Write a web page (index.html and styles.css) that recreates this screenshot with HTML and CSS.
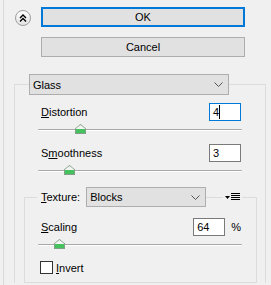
FILE: index.html
```html
<!DOCTYPE html>
<html lang="en">

<head>
  <meta charset="UTF-8" />
  <title>Glass</title>
  <link rel="stylesheet" href="styles.css">
</head>

<body>
  <div class="panel">
    <div class="top">
      <button class="collapse">
        <svg width="8" height="8" viewBox="0 0 8 8">
          <path d="M1 4 L4 1 L7 4 M1 7.5 L4 4.5 L7 7.5" fill="none" stroke="#000" stroke-width="1.4" />
        </svg>
      </button>
      <div class="actions">
        <button class="btn default">OK</button>
        <button class="btn">Cancel</button>
      </div>
    </div>

    <div class="group">
      <div class="select preset">
        <span>Glass</span>
        <svg width="9" height="5" viewBox="0 0 9 5">
          <path d="M0.5 0.5 L4.5 4.5 L8.5 0.5" fill="none" stroke="#555" />
        </svg>
      </div>

      <div class="field">
        <span><u>D</u>istortion</span>
        <div class="input focus">4<span class="caret"></span></div>
      </div>
      <div class="slider">
        <span class="thumb" style="left: 37px"></span>
      </div>

      <div class="field second">
        <span>S<u>m</u>oothness</span>
        <div class="input">3</div>
      </div>
      <div class="slider">
        <span class="thumb" style="left: 26px"></span>
      </div>

      <div class="texture">
        <div class="tex-head">
          <span class="tex-label"><u>T</u>exture:</span>
          <div class="select tex-select">
            <span>Blocks</span>
            <svg width="9" height="5" viewBox="0 0 9 5">
              <path d="M0.5 0.5 L4.5 4.5 L8.5 0.5" fill="none" stroke="#555" />
            </svg>
          </div>
          <span class="menu">
            <svg width="15" height="8" viewBox="0 0 15 8">
              <polygon points="0,3 5,3 2.5,6" fill="#000" />
              <rect x="6" y="0" width="9" height="1" fill="#000" />
              <rect x="6" y="2" width="9" height="1" fill="#000" />
              <rect x="6" y="4" width="9" height="1" fill="#000" />
              <rect x="6" y="6" width="9" height="1" fill="#000" />
            </svg>
          </span>
        </div>

        <div class="field scaling">
          <span><u>S</u>caling</span>
          <div class="unit">
            <div class="input">64</div>
            <span class="pct">%</span>
          </div>
        </div>
        <div class="slider tex-slider">
          <span class="thumb" style="left: 16px"></span>
        </div>

        <label class="check">
          <span class="box"></span>
          <span><u>I</u>nvert</span>
        </label>
      </div>
    </div>
  </div>
</body>

</html>
```

FILE: styles.css
```css
body {
  margin: 0;
  width: 271px;
  height: 285px;
  overflow: hidden;
  background: #f0f0f0;
  color: #000;
  font-family: "Liberation Sans", Arial, sans-serif;
  font-size: 11px;
}

.panel {
  margin-left: 3px;
  height: 285px;
  border-left: 1px solid #dadada;
  box-sizing: border-box;
}

.top {
  display: flex;
  align-items: flex-start;
  padding-top: 7px;
}

.collapse {
  width: 16px;
  height: 16px;
  margin: 3px 0 0 11px;
  padding: 0;
  border: 1px solid #9d9d9d;
  border-radius: 50%;
  background: linear-gradient(#ffffff, #e2e2e2);
  box-sizing: border-box;
  display: flex;
  align-items: center;
  justify-content: center;
}

.actions {
  margin-left: 10px;
  width: 204px;
  display: flex;
  flex-direction: column;
  gap: 10px;
}

.btn {
  height: 20px;
  padding: 0;
  border: 1px solid #adadad;
  background: #e1e1e1;
  font: inherit;
  color: #000;
  box-sizing: border-box;
}

.btn.default {
  border: 2px solid #0078d7;
}

.group {
  margin: 27px 5px 0 10px;
  border: 1px solid #dcdcdc;
  border-bottom: none;
}

.select {
  height: 21px;
  padding: 0 5px 0 3px;
  border: 1px solid #adadad;
  background: #e1e1e1;
  box-sizing: border-box;
  display: flex;
  align-items: center;
  justify-content: space-between;
}

.preset {
  width: 200px;
  margin: -11px 0 0 14px;
}

.field {
  display: flex;
  align-items: center;
  justify-content: space-between;
  margin: 8px 24px 0 26px;
}

.field.second {
  margin-top: 10px;
}

.input {
  width: 32px;
  height: 18px;
  padding-left: 3px;
  border: 1px solid #7a7a7a;
  background: #fff;
  box-sizing: border-box;
  display: flex;
  align-items: center;
}

.input.focus {
  border-color: #0078d7;
}

.caret {
  width: 1px;
  height: 14px;
  background: #000;
}

.slider {
  position: relative;
  height: 10px;
  margin: 3px 23px 0 23px;
}

.slider::before {
  content: "";
  position: absolute;
  left: 0;
  right: 0;
  top: 5px;
  height: 1px;
  background: #a8a8a8;
  border-bottom: 1px solid #fff;
  border-radius: 1px;
}

.thumb {
  position: absolute;
  top: 0;
  width: 11px;
  height: 10px;
  background: #7f9f86;
  clip-path: polygon(50% 0, 100% 45%, 100% 100%, 0 100%, 0 45%);
}

.thumb::after {
  content: "";
  position: absolute;
  inset: 1px;
  background: linear-gradient(#f4f4f4 50%, #45c25d 50%);
  clip-path: polygon(50% 0, 100% 45%, 100% 100%, 0 100%, 0 45%);
}

.texture {
  margin: 22px 8px 0 9px;
  padding-bottom: 8px;
  border: 1px solid #dcdcdc;
}

.tex-head {
  display: flex;
  align-items: center;
  height: 20px;
  margin: -11px 0 0 12px;
}

.tex-label {
  padding: 0 6px 0 4px;
  background: #f0f0f0;
}

.tex-select {
  width: 120px;
  height: 20px;
}

.menu {
  margin-left: 17px;
  padding: 0 2px;
  background: #f0f0f0;
  display: flex;
}

.field.scaling {
  margin: 11px 15px 0 16px;
}

.unit {
  display: flex;
  align-items: center;
}

.input + .pct {
  margin-left: 6px;
}

.tex-slider {
  margin: 3px 14px 0 13px;
}

.check {
  display: flex;
  align-items: center;
  margin: 12px 0 0 15px;
}

.box {
  width: 13px;
  height: 13px;
  margin-right: 3px;
  border: 1px solid #333;
  background: #fff;
  box-sizing: border-box;
}
```
